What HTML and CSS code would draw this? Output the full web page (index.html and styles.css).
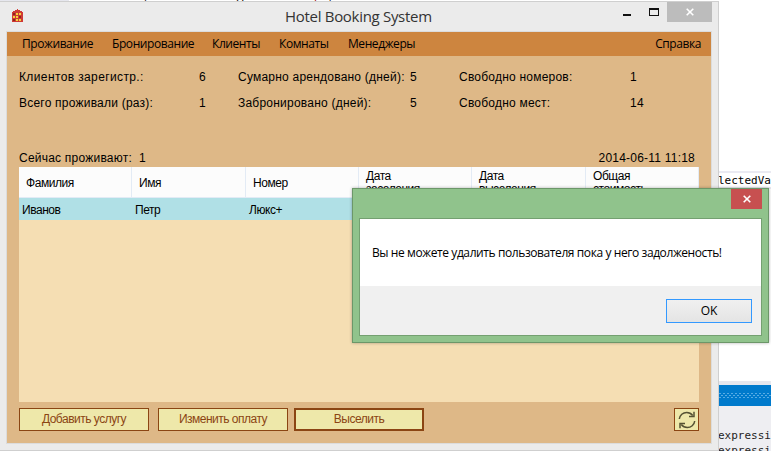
FILE: index.html
```
<!DOCTYPE html>
<html lang="ru">
<head>
<meta charset="utf-8">
<title>Hotel Booking System</title>
<link rel="stylesheet" href="styles.css">
</head>
<body>
<div class="desktop">
  <div class="editor-tint"></div>
  <div class="editor-top"><i>if</i> (bidForm.FormType == <b>"Group"</b>)</div>
  <div class="editor">
    <div class="code-line">lectedVa</div>
    <div class="pane-title"></div>
    <div class="pane"><div>expressi</div><div>expressi</div></div>
  </div>

  <section class="window">
    <header class="titlebar">
      <svg class="app-icon" viewBox="0 0 11 13" shape-rendering="crispEdges">
        <path fill="#cf3a34" d="M3 1h2V0h1v1h2v1h2v1h1v10H0V3h1V2h2z"/>
        <path fill="#f5d33b" d="M4 4h2v2H4zM7 4h2v2H7zM1 7h2v2H1zM4 7h2v2H4zM4 10h2v2H4zM7 10h2v2H7z"/>
        <path fill="#8c241f" d="M1 4h2v2H1zM7 7h2v2H7zM1 10h2v2H1z"/>
      </svg>
      <h1 class="title">Hotel Booking System</h1>
      <div class="controls">
        <svg class="min" viewBox="0 0 40 20" shape-rendering="crispEdges"><path fill="#111" d="M0 12h8v2H0z"/><path fill="#111" fill-rule="evenodd" d="M26 6h10v8H26zM27 8v5h8V8z"/></svg>
        <div class="close"><svg viewBox="0 0 8 8"><path d="M.7.7l6.6 6.6M7.3.7L.7 7.3" stroke="#fff" stroke-width="1.6"/></svg></div>
      </div>
    </header>
    <div class="client">
      <nav class="menu">
        <span>Проживание</span><span>Бронирование</span><span>Клиенты</span><span>Комнаты</span><span>Менеджеры</span><span class="help">Справка</span>
      </nav>
      <div class="stats">
        <span class="loose">Клиентов зарегистр.:</span><span>6</span><span>Сумарно арендовано (дней):</span><span>5</span><span>Свободно номеров:</span><span>1</span>
        <span>Всего проживали (раз):</span><span>1</span><span>Забронировано (дней):</span><span>5</span><span>Свободно мест:</span><span>14</span>
      </div>
      <div class="summary"><span>Сейчас проживают:&nbsp; 1</span><time>2014-06-11 11:18</time></div>
      <div class="grid">
        <div class="row head"><span>Фамилия</span><span>Имя</span><span>Номер</span><span>Дата<br>заселения</span><span>Дата<br>выселения</span><span>Общая<br>стоимость</span></div>
        <div class="row selected"><span>Иванов</span><span>Петр</span><span>Люкс+</span></div>
      </div>
      <footer class="actions">
        <button>Добавить услугу</button><button class="b2">Изменить оплату</button><button class="default">Выселить</button>
        <button class="refresh"><svg viewBox="0 0 18 18" fill="none" stroke="#555233" stroke-width="1.5"><path d="M1.300 8C1.700 4 5 1.500 8.700 1.500c2.500 0 4.500 1 6 3M16.700 10c-.4 4-3.700 6.500-7.400 6.500-2.500 0-4.500-1-6-3"/><path d="M16 .8v4.700h-5M2 17.200v-4.700h5"/></svg></button>
      </footer>
    </div>
  </section>

  <section class="dialog">
    <div class="dialog-close"><svg viewBox="0 0 8 8"><path d="M.7.7l6.600 6.600M7.300.7L.7 7.300" stroke="#fff" stroke-width="1.600"/></svg></div>
    <div class="dialog-body">
      <p class="message">Вы не можете удалить пользователя пока у него задолженость!</p>
      <div class="dialog-foot"><button class="ok">OK</button></div>
    </div>
  </section>
</div>
</body>
</html>
```
FILE: styles.css
```
* { box-sizing: border-box; }
body { margin: 0; background: #fff; overflow: hidden; }
.desktop { position: relative; width: 771px; height: 451px; overflow: hidden; background: #fff; }
button { margin: 0; padding: 0; border-radius: 0; }
svg { display: block; }

.editor-tint { position: absolute; left: 0; top: 0; width: 69px; height: 2px; background: #e6e7ee; }
.editor-top { position: absolute; left: 122px; top: -12px; height: 17px; font: 11px/17px "DejaVu Sans Mono", monospace; color: #000; white-space: pre; }
.editor-top i { font-style: normal; color: #00f; }
.editor-top b { font-weight: 400; color: #a31515; }
.editor { position: absolute; left: 718px; top: 0; width: 53px; height: 451px; padding-top: 171px; display: flex; flex-direction: column; }
.code-line { height: 18px; border: 2px solid #eaeaf2; border-width: 2px 0; font: 11px/15px "DejaVu Sans Mono", monospace; color: #000; white-space: pre; }
.pane-title { margin-top: 192px; height: 25px; border-top: 4px solid #e6e7ee; background: radial-gradient(circle, #58ace4 0.6px, transparent 0.9px) 0 7px / 4px 3px repeat-x, radial-gradient(circle, #58ace4 0.6px, transparent 0.9px) 2px 9px / 4px 3px repeat-x, radial-gradient(circle, #58ace4 0.6px, transparent 0.9px) 0 11px / 4px 3px repeat-x, #007acc; }
.pane { flex: 1; background: #eeeef2; padding-top: 22px; font: 11px/15px "DejaVu Sans Mono", monospace; color: #1e1e1e; overflow: hidden; }

.window { position: absolute; left: 0; top: 1px; width: 719px; height: 450px; background: #ebebeb; border: 1px solid #cfcfcf; border-left: 0; padding: 0 6px 6px 6px; }
.titlebar { height: 29px; display: flex; }
.app-icon { width: 11px; height: 13px; margin: 7px 0 0 6px; }
.title { margin: 0 0 0 262px; width: 160px; font: 400 15px/28px "Open Sans", sans-serif; letter-spacing: -.3px; color: #333; white-space: nowrap; }
.controls { margin-left: auto; display: flex; }
.min { width: 40px; height: 20px; margin-right: 4px; }
.close { width: 45px; height: 20px; background: #bcbcbc; display: grid; place-items: center; }
.close svg, .dialog-close svg { width: 8px; height: 8px; }

.client { height: 413px; border: 1px solid #dcdcdc; background: #deb887; display: flex; flex-direction: column; font: 12px/16px "Liberation Sans", sans-serif; letter-spacing: .22px; color: #000; }
.menu { height: 24px; background: #cd853f; display: grid; grid-template-columns: 90px 100px 67px 69px 1fr auto; padding: 0 10px 0 15px; font: 12px/24px "Open Sans", sans-serif; letter-spacing: -.42px; white-space: nowrap; }
.stats { display: grid; grid-template-columns: 180px 39px 172px 49px 171px 40px; grid-auto-rows: 26px; padding: 13px 0 0 12px; height: 93px; white-space: nowrap; }
.loose { letter-spacing: .38px; }
.summary { display: flex; justify-content: space-between; padding: 0 16px 0 12px; height: 18px; line-height: 18px; }
.grid { margin: 0 12px; height: 235px; background: #f5deb3; font-size: 12px; letter-spacing: -.45px; }
.row { display: grid; grid-template-columns: 113px 114px 113px 113px 114px 113px; }
.head { height: 31px; background: #fcfcfc; border-bottom: 1px solid #e3ebf5; line-height: 13px; overflow: hidden; }
.head span { height: 31px; border-right: 1px solid #e3ebf5; padding: 10px 0 0 7px; }
.head span:nth-child(n+4) { padding-top: 3px; }
.selected { height: 22px; background: #b0e0e6; line-height: 24px; }
.selected span { padding-left: 3px; }
.actions { display: flex; padding: 6px 12px 0; height: 30px; }
.actions button { width: 130px; height: 23px; background: #eee8aa; border: 1px solid #8b4513; color: #8b4513; font: 12px/21px "Liberation Sans", sans-serif; letter-spacing: -.5px; margin-right: 9px; }
.actions .b2 { margin-right: 6px; }
.actions .default { border-width: 2px; line-height: 19px; }
.actions .refresh { width: 25px; margin: 0 0 0 auto; display: grid; place-items: center; }
.refresh svg { width: 18px; height: 18px; }

.dialog { position: absolute; left: 352px; top: 188px; width: 417px; height: 155px; background: #90c38c; border: 1px solid #6c9769; box-shadow: 0 0 3px rgba(0,0,0,.3); padding: 0 6px 6px; display: flex; flex-direction: column; }
.dialog-close { align-self: flex-end; width: 31px; height: 20px; background: #c75050; display: grid; place-items: center; margin-bottom: 9px; }
.dialog-body { flex: 1; border: 1px solid #74a071; background: #fff; display: flex; flex-direction: column; }
.message { margin: 0; flex: 1; padding-left: 12px; font: 12px/67px "Open Sans", sans-serif; letter-spacing: -.41px; color: #000; white-space: nowrap; }
.dialog-foot { height: 49px; background: #f0f0f0; display: flex; justify-content: flex-end; padding: 13px 9px; }
.ok { width: 86px; height: 24px; border: 1px solid #3399ff; background: linear-gradient(#f0f0f0, #e4e4e4); font: 12px/22px "Open Sans", sans-serif; color: #000; }
```
